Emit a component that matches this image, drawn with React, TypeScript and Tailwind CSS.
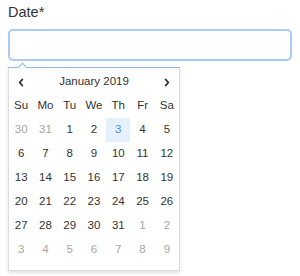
import React from "react";

const weekdays = ["Su", "Mo", "Tu", "We", "Th", "Fr", "Sa"];

type Day = { n: number; out?: boolean; selected?: boolean };

function buildDays(): Day[] {
  const days: Day[] = [{ n: 30, out: true }, { n: 31, out: true }];
  for (let i = 1; i <= 31; i++) days.push({ n: i, selected: i === 3 });
  for (let i = 1; i <= 9; i++) days.push({ n: i, out: true });
  return days;
}

const Chevron = ({ dir }: { dir: "left" | "right" }) => (
  <svg width="6" height="9" viewBox="0 0 6 9" fill="none">
    <polyline
      points={dir === "left" ? "4.3,1.5 1.7,4.5 4.3,7.5" : "1.7,1.5 4.3,4.5 1.7,7.5"}
      stroke="#333"
      strokeWidth="1.9"
      strokeLinecap="round"
      strokeLinejoin="round"
    />
  </svg>
);

export default function App() {
  const days = buildDays();

  return (
    <div className="w-[300px] h-[276px] bg-white px-2 font-['Liberation_Sans',Arial,sans-serif] text-[#333]">
      <div className="h-6 leading-6 text-[14.5px]">Date*</div>
      <input
        type="text"
        className="mt-[5px] block w-full h-8 rounded-[5px] border-2 border-[#a9cafa] outline-none"
      />

      <div className="relative mt-[6px] w-[172px] border border-[#dcdcdc] border-t-[#8fb7f3] bg-white shadow-[0_2px_4px_rgba(0,0,0,0.12)] pt-[2px] pb-2">
        <div className="absolute -top-[4px] left-[10px] h-[7px] w-[7px] rotate-45 border-l border-t border-[#8fb7f3] bg-white" />

        <div className="grid grid-cols-7 h-6 items-center text-[11.5px]">
          <div className="flex justify-center">
            <Chevron dir="left" />
          </div>
          <div className="col-span-5 text-center">January 2019</div>
          <div className="flex justify-center">
            <Chevron dir="right" />
          </div>
        </div>

        <div className="grid grid-cols-7 text-[11.5px]">
          {weekdays.map((w) => (
            <div key={w} className="h-6 flex items-center justify-center">
              {w}
            </div>
          ))}
          {days.map((d, i) => (
            <div
              key={i}
              className={`h-6 flex items-center justify-center ${
                d.selected
                  ? "bg-[#e7f1fe] text-[#4a8fe8]"
                  : d.out
                  ? "text-[#a6a6a6]"
                  : "text-[#333]"
              }`}
            >
              {d.n}
            </div>
          ))}
        </div>
      </div>
    </div>
  );
}
